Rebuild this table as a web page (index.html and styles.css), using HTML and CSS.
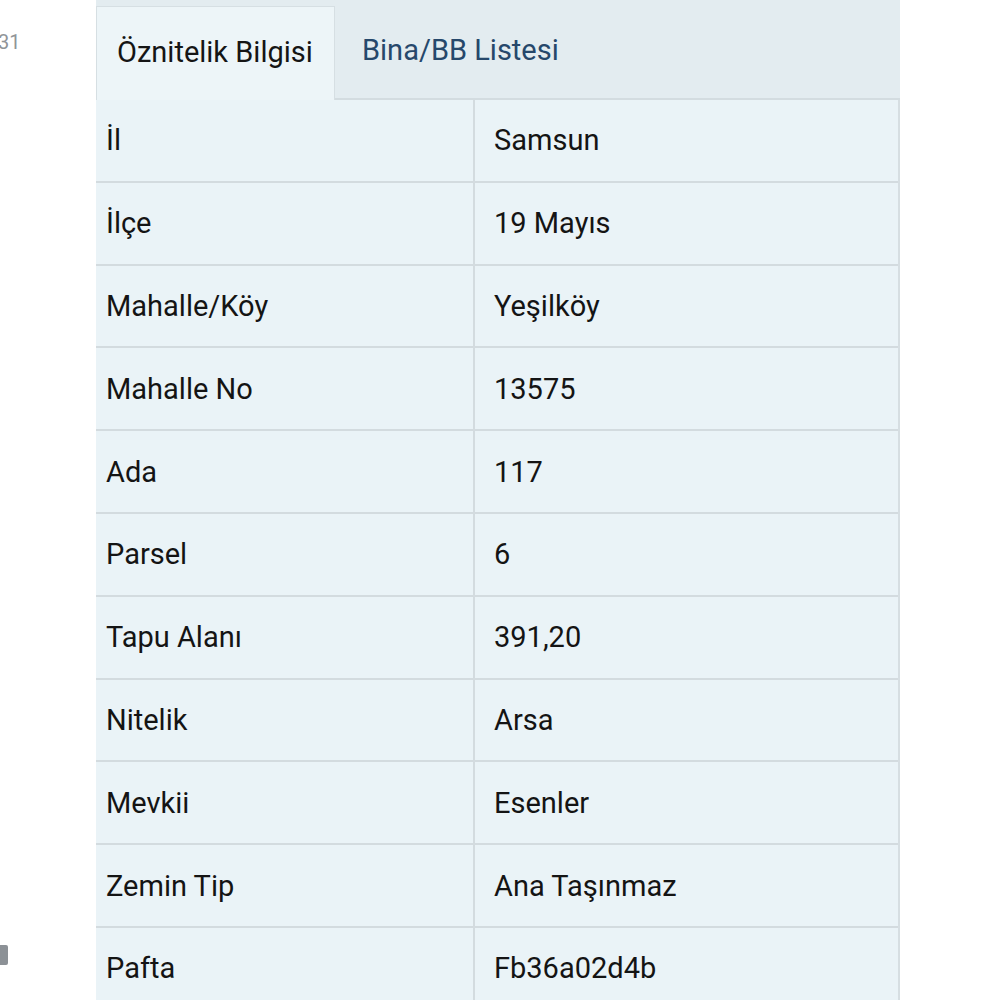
FILE: index.html
```html
<!DOCTYPE html>
<html lang="tr">
<head>
<meta charset="utf-8">
<link rel="stylesheet" href="styles.css">
</head>
<body>
<div class="page">
  <aside class="side">
    <div class="side-num">31</div>
    <div class="side-mark"></div>
  </aside>
  <main class="panel">
    <div class="tabs">
      <div class="tab active">Öznitelik Bilgisi</div>
      <div class="tab link">Bina/BB Listesi</div>
    </div>
    <div class="table">
      <div class="row"><div class="cell key">İl</div><div class="cell val">Samsun</div></div>
      <div class="row"><div class="cell key">İlçe</div><div class="cell val">19 Mayıs</div></div>
      <div class="row"><div class="cell key">Mahalle/Köy</div><div class="cell val">Yeşilköy</div></div>
      <div class="row"><div class="cell key">Mahalle No</div><div class="cell val">13575</div></div>
      <div class="row"><div class="cell key">Ada</div><div class="cell val">117</div></div>
      <div class="row"><div class="cell key">Parsel</div><div class="cell val">6</div></div>
      <div class="row"><div class="cell key">Tapu Alanı</div><div class="cell val">391,20</div></div>
      <div class="row"><div class="cell key">Nitelik</div><div class="cell val">Arsa</div></div>
      <div class="row"><div class="cell key">Mevkii</div><div class="cell val">Esenler</div></div>
      <div class="row"><div class="cell key">Zemin Tip</div><div class="cell val">Ana Taşınmaz</div></div>
      <div class="row"><div class="cell key">Pafta</div><div class="cell val">Fb36a02d4b</div></div>
    </div>
  </main>
</div>
</body>
</html>
```
FILE: styles.css
```css
html, body {
  margin: 0;
  padding: 0;
  background: #ffffff;
  height: 1000px;
  overflow: hidden;
}
body {
  font-family: Roboto, "Liberation Sans", sans-serif;
  color: #141414;
}
.page {
  display: flex;
  width: 1000px;
  height: 1000px;
}
.side {
  width: 96px;
  flex: none;
  display: flex;
  flex-direction: column;
  justify-content: space-between;
  padding: 30px 0 35px 0;
  box-sizing: border-box;
}
.side-num {
  font-size: 20px;
  color: #909498;
  margin-left: -2px;
}
.side-mark {
  width: 8px;
  height: 20px;
  background: #8c9196;
  border-radius: 0 2px 2px 0;
}
.panel {
  width: 804px;
  flex: none;
  background: #e9f2f6;
}
.tabs {
  display: flex;
  height: 100px;
  box-sizing: border-box;
  background: #e3ecf0;
  padding-top: 6px;
  border-bottom: 2px solid #d3dce0;
}
.tab {
  font-size: 29px;
  display: flex;
  align-items: center;
  padding: 0 20px 4px 20px;
  box-sizing: border-box;
}
.tab.active {
  width: 239px;
  background: #edf5f8;
  border: 1px solid #d6dfe3;
  border-bottom: none;
  margin-bottom: -2px;
  color: #151515;
}
.tab.link {
  color: #26486b;
  padding-left: 27px;
}
.table {
  display: flex;
  flex-direction: column;
  border-right: 2px solid #d6dee2;
}
.row {
  display: grid;
  grid-template-columns: 379px 1fr;
  height: 82.8px;
  box-sizing: border-box;
  border-bottom: 2px solid #d3dbdf;
  background: #eaf3f7;
}
.cell {
  display: flex;
  align-items: center;
  font-size: 29px;
  padding-bottom: 0;
}
.key {
  padding-left: 10px;
  border-right: 2px solid #d3dbdf;
}
.val {
  padding-left: 19px;
}
```
